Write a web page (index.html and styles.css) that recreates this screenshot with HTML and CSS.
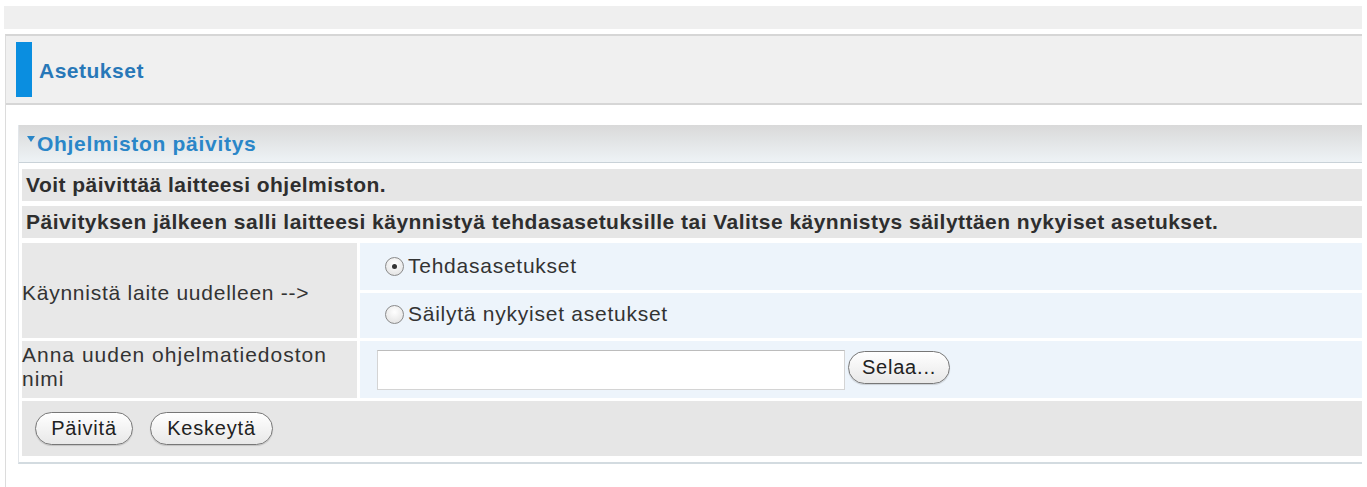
FILE: index.html
```html
<!DOCTYPE html>
<html lang="fi">
<head>
<meta charset="utf-8">
<title>Asetukset</title>
<link rel="stylesheet" href="styles.css">
</head>
<body>
<div class="topbar"></div>
<div class="page">
  <div class="title">
    <span class="title-bar"></span>
    <span class="title-text">Asetukset</span>
  </div>
  <div class="panel">
    <div class="panel-head"><span class="caret"></span>Ohjelmiston päivitys</div>
    <div class="rows">
      <div class="row info">Voit päivittää laitteesi ohjelmiston.</div>
      <div class="row info">Päivityksen jälkeen salli laitteesi käynnistyä tehdasasetuksille tai Valitse käynnistys säilyttäen nykyiset asetukset.</div>
      <div class="form">
        <div class="label restart">Käynnistä laite uudelleen --&gt;</div>
        <div class="value radio-cell first"><span class="radio checked"></span>Tehdasasetukset</div>
        <div class="value radio-cell second"><span class="radio"></span>Säilytä nykyiset asetukset</div>
        <div class="label file">Anna uuden ohjelmatiedoston<br>nimi</div>
        <div class="value file-cell"><span class="file-input"></span><span class="btn selaa">Selaa...</span></div>
      </div>
      <div class="row actions"><span class="btn b1">Päivitä</span><span class="btn b2">Keskeytä</span></div>
    </div>
  </div>
</div>
</body>
</html>
```
FILE: styles.css
```css
html, body {
  margin: 0;
  padding: 0;
  background: #ffffff;
  font-family: "Liberation Sans", Arial, sans-serif;
  color: #333;
}
.topbar {
  margin: 6px 5px 0 4px;
  height: 23px;
  background: #efefef;
}
.page {
  margin: 5px 5px 0 5px;
  border-left: 1px solid #dcdcdc;
  border-top: 2px solid #d6d6d6;
  height: 460px;
}
.title {
  height: 67px;
  background: #f0f0f0;
  border-bottom: 2px solid #d6d6d6;
  display: flex;
  align-items: center;
  padding-left: 10px;
}
.title-bar {
  width: 16px;
  height: 55px;
  background: #0a8ee0;
}
.title-text {
  margin-left: 7px;
  margin-top: 2px;
  font-weight: bold;
  font-size: 21px;
  letter-spacing: 0.5px;
  color: #2878b8;
}
.panel {
  margin: 20px 0 0 12px;
  border-left: 1px solid #e2e6ea;
  border-bottom: 2px solid #d3dbe0;
  padding-bottom: 6px;
}
.panel-head {
  height: 37px;
  background: linear-gradient(#d9d9d9, #eef3f6);
  border-bottom: 1px solid #c9d2d8;
  display: flex;
  align-items: center;
  padding-left: 8px;
  font-weight: bold;
  font-size: 21px;
  letter-spacing: 0.7px;
  color: #2a86c8;
}
.caret {
  width: 0;
  height: 0;
  border-left: 4px solid transparent;
  border-right: 4px solid transparent;
  border-top: 6px solid #2a86c8;
  margin-right: 2px;
  margin-top: -9px;
  flex: none;
}
.rows {
  padding: 6px 0 0 3px;
  display: flex;
  flex-direction: column;
  gap: 5px;
}
.row.info {
  height: 32px;
  background: #e6e6e6;
  display: flex;
  align-items: center;
  padding-left: 4px;
  font-weight: bold;
  font-size: 21px;
  letter-spacing: 0.47px;
  color: #2e2e2e;
  white-space: nowrap;
}
.form {
  display: grid;
  grid-template-columns: 335px 1fr;
  grid-template-rows: 47px 45px 57px;
  gap: 3px;
}
.label {
  background: #e8e8e8;
  font-size: 21px;
  letter-spacing: 0.75px;
  color: #333;
  display: flex;
  align-items: center;
}
.label.restart {
  grid-row: 1 / span 2;
  padding-top: 4px;
}
.label.file {
  display: block;
  padding-top: 2px;
  line-height: 24px;
  letter-spacing: 1px;
}
.value {
  background: #edf4fb;
  display: flex;
  font-size: 21px;
  letter-spacing: 0.75px;
  color: #333;
}
.radio-cell {
  padding-left: 25px;
  align-items: flex-start;
}
.radio-cell.first {
  padding-top: 11px;
}
.radio-cell.second {
  padding-top: 9px;
}
.radio {
  width: 17px;
  height: 17px;
  border: 1px solid #8a8a8a;
  border-radius: 50%;
  background: radial-gradient(circle at 50% 35%, #ffffff, #dedede);
  margin-right: 4px;
  margin-top: 3px;
  display: flex;
  align-items: center;
  justify-content: center;
  flex: none;
}
.radio.checked::after {
  content: "";
  width: 5px;
  height: 5px;
  border-radius: 50%;
  background: #333;
}
.file-cell {
  padding-left: 17px;
  align-items: center;
}
.file-input {
  width: 466px;
  height: 38px;
  background: #ffffff;
  border: 1px solid #d4d4d4;
  border-top-color: #bcbcbc;
}
.btn {
  display: inline-flex;
  align-items: center;
  justify-content: center;
  height: 33px;
  box-sizing: border-box;
  border: 1.5px solid #777;
  border-radius: 17px;
  background: linear-gradient(#ffffff, #e8e8e8);
  font-size: 20px;
  letter-spacing: 0.8px;
  color: #222;
  box-shadow: 0 1px 1px rgba(0,0,0,0.15);
}
.btn.selaa {
  margin-left: 3px;
  margin-top: -4px;
  width: 102px;
}
.row.actions {
  height: 55px;
  margin-top: -2px;
  background: #e6e6e6;
  display: flex;
  align-items: center;
  gap: 17px;
  padding-left: 13px;
}
.btn.b1 { width: 98px; }
.btn.b2 { width: 123px; }
```
